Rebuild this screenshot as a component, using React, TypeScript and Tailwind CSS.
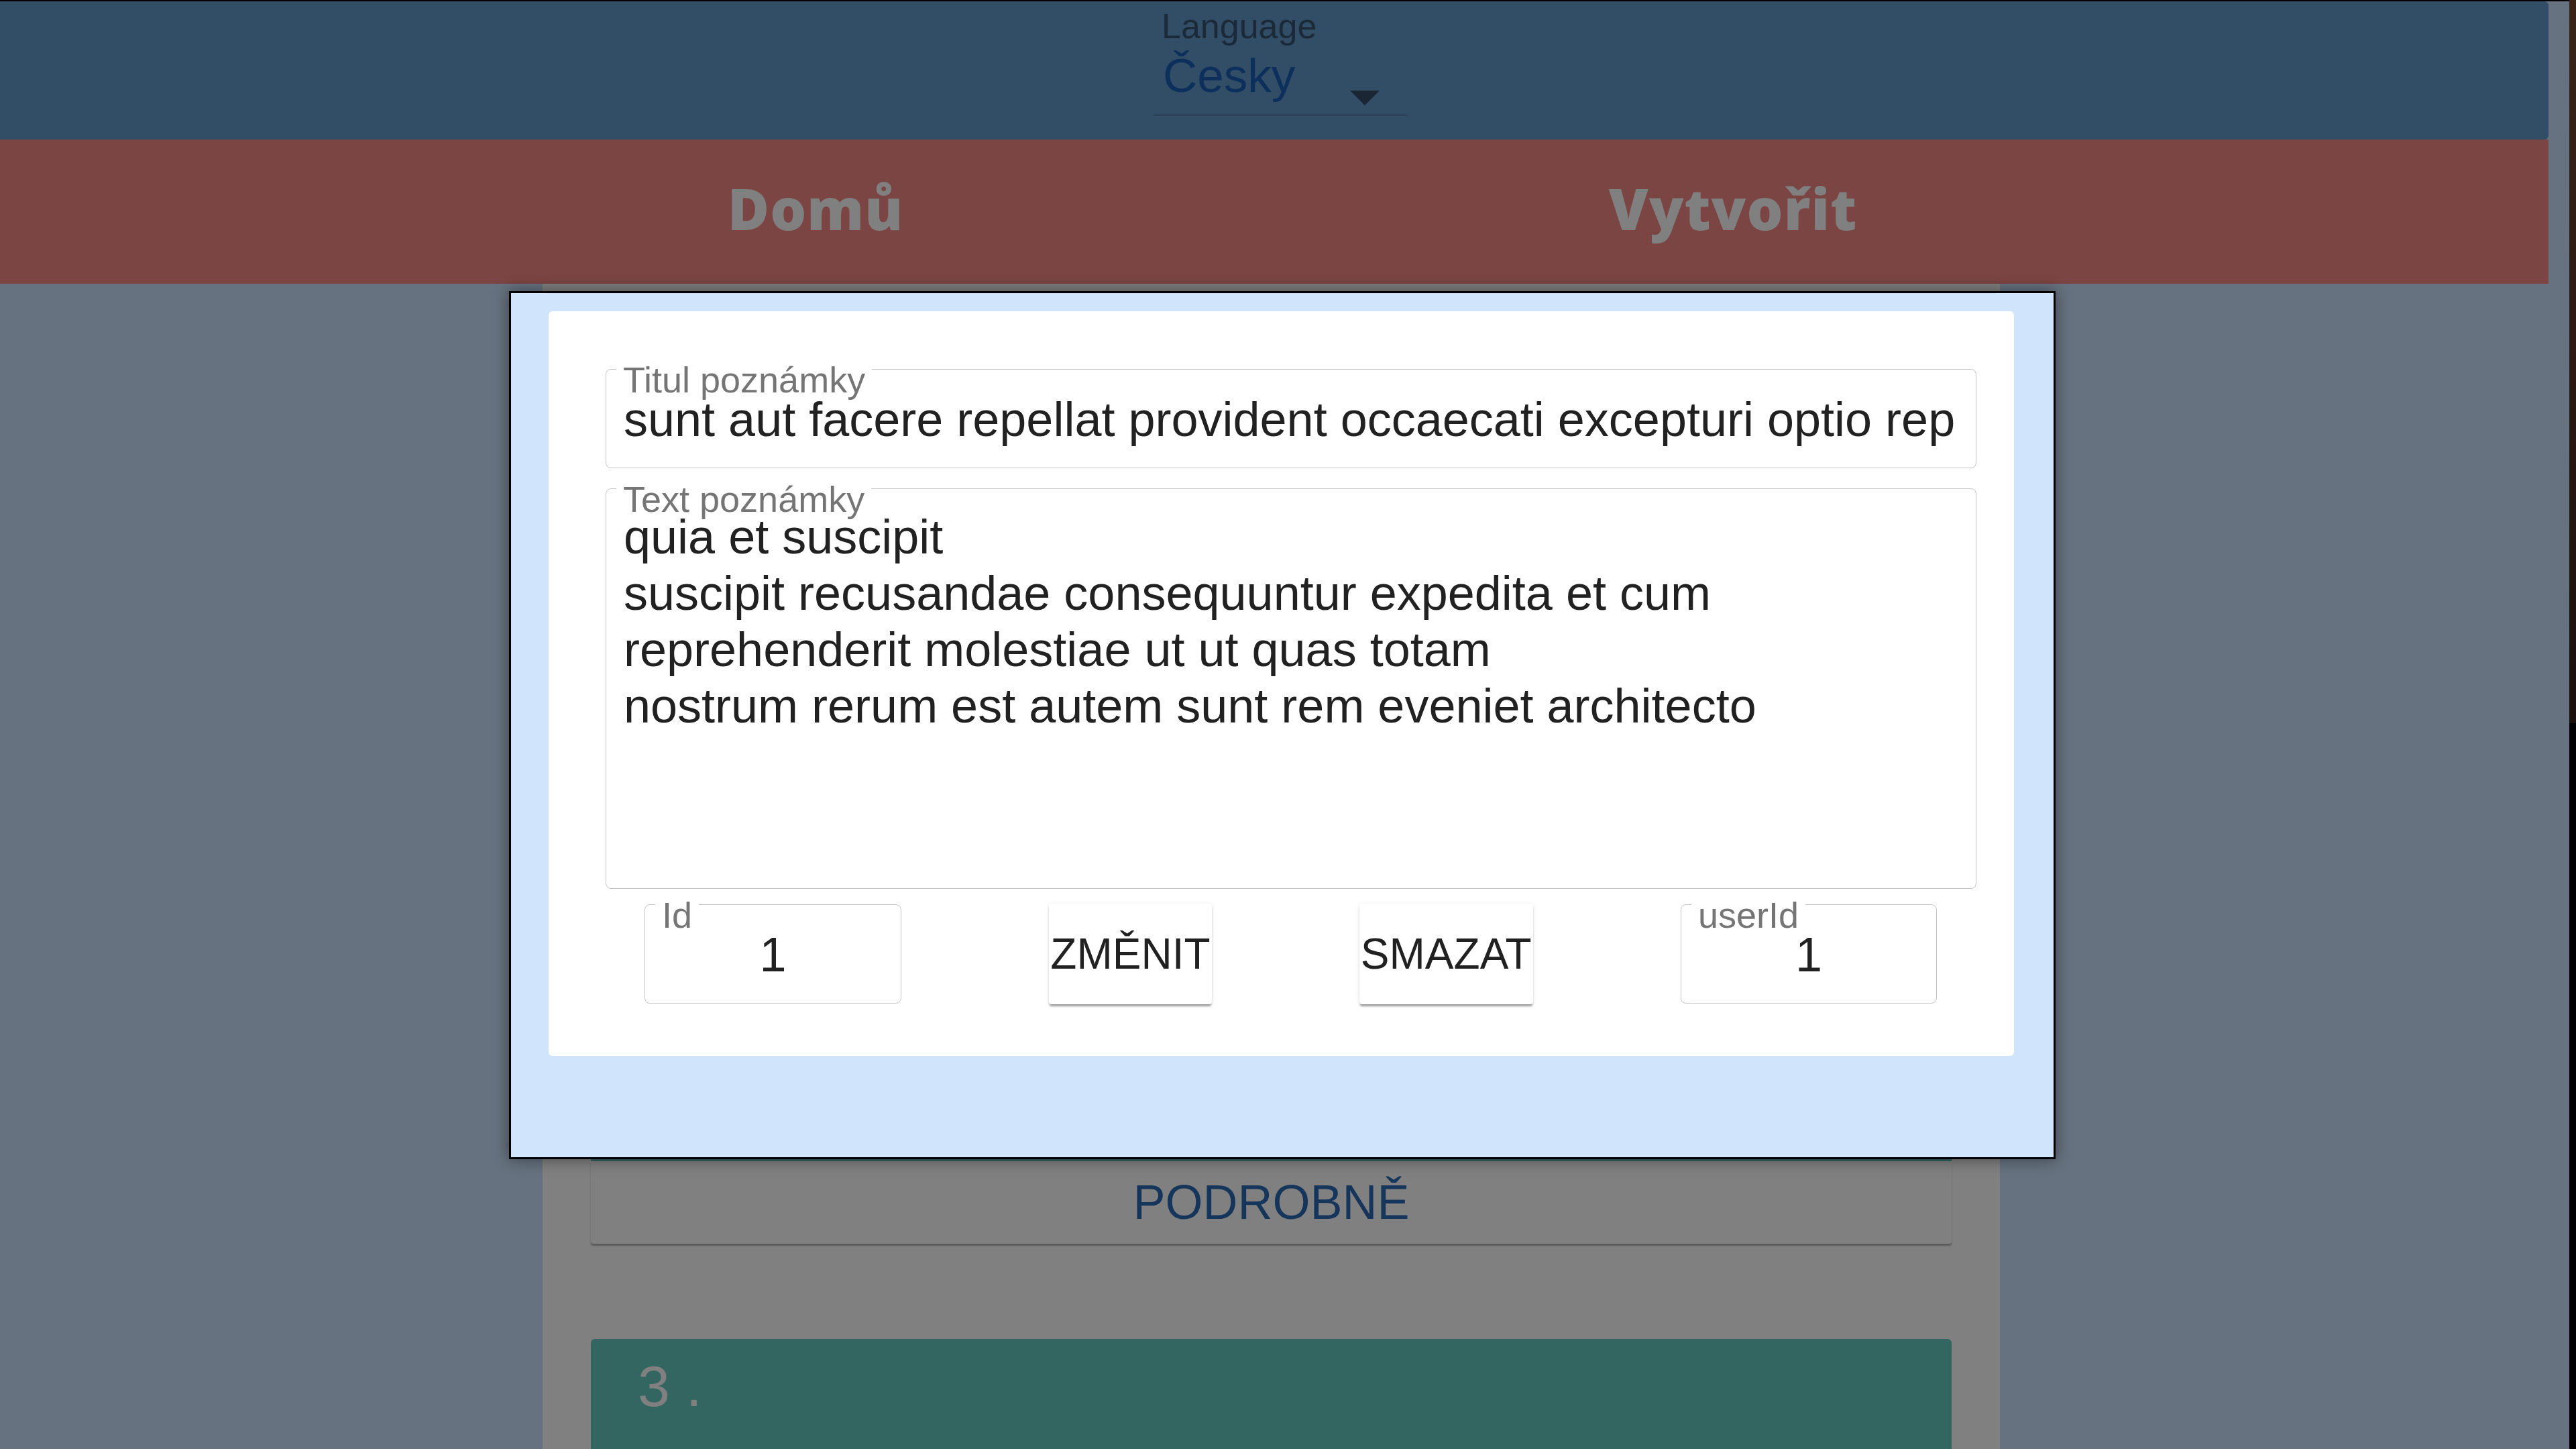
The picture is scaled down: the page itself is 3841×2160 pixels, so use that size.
import React from 'react';

const sans = "font-['Liberation_Sans',Arial,sans-serif]";

const noteTitle = 'sunt aut facere repellat provident occaecati excepturi optio reprehenderit';
const noteBody =
  'quia et suscipit\nsuscipit recusandae consequuntur expedita et cum\nreprehenderit molestiae ut ut quas totam\nnostrum rerum est autem sunt rem eveniet architecto';

const FieldLabel: React.FC<{ text: string }> = ({ text }) => (
  <span className="absolute left-[15px] -top-[12px] bg-white px-[10px] text-[54px] leading-[54px] text-[#757575]">
    {text}
  </span>
);

const SmallField: React.FC<{ label: string; value: string; width: string }> = ({ label, value, width }) => (
  <div className={`relative h-[148px] ${width} rounded-[8px] border border-[#c4c4c4] pt-[32px] text-center`}>
    <FieldLabel text={label} />
    <div className="text-[72px] leading-[84px] text-[#212121]">{value}</div>
  </div>
);

const ActionButton: React.FC<{ label: string }> = ({ label }) => (
  <button className="-mt-[1px] h-[150px] rounded-[4px] bg-white px-[2px] text-[64px] leading-[150px] text-[#212121] shadow-[0_4px_3px_-1px_rgba(0,0,0,0.35),0_1px_6px_0_rgba(0,0,0,0.1)]">
    {label}
  </button>
);

export default function App() {
  return (
    <div className={`relative flex h-[2160px] w-[3841px] overflow-hidden bg-black ${sans}`}>
      <div className="relative flex h-full w-[3831px] flex-col overflow-hidden bg-[#66727f]">
        <div className="h-[2px] w-full shrink-0 bg-black" />

        {/* language bar */}
        <header className="flex h-[206px] w-[3800px] shrink-0 justify-center rounded-r-[6px] bg-[#324d66] pt-[11px]">
          <div className="ml-[20px] w-[380px]">
            <div className="pl-[12px] text-[52px] leading-[52px] text-[#1b2a38]">Language</div>
            <div className="mt-[12px] flex items-start border-b border-[#1e2e3e] pb-[23px] pl-[14px]">
              <span className="text-[71px] leading-[71px] text-[#0d2f5c]">Česky</span>
              <svg className="-mb-[9px] ml-auto mr-[43px] mt-[58px]" width="44" height="22" viewBox="0 0 44 22">
                <polygon points="0,0 44,0 22,22" fill="#1b2634" />
              </svg>
            </div>
          </div>
        </header>

        {/* nav */}
        <nav className="flex h-[215px] w-[3800px] shrink-0 items-center justify-center bg-[#7b4543] pb-[11px] font-['Open_Sans',sans-serif] text-[85px] font-extrabold leading-none tracking-[1px] text-[#808080]">
          <div className="w-[1368px] text-center">Domů</div>
          <div className="w-[1368px] text-center">Vytvořit</div>
        </nav>

        {/* list column behind the dialog */}
        <main className="ml-[809px] flex w-[2173px] flex-1 flex-col bg-[#808080] px-[72px]">
          <div className="mt-[1077px] h-[231px] shrink-0 bg-[#336661]" />
          <div className="h-[123px] shrink-0 rounded-b-[4px] text-center text-[72px] leading-[123px] text-[#15355a] shadow-[0_3px_2px_rgba(0,0,0,0.3)]">
            PODROBNĚ
          </div>
          <div className="mt-[142px] h-[300px] shrink-0 rounded-t-[6px] bg-[#336661] pl-[70px] pt-[27px]">
            <span className="text-[86px] leading-[86px] text-[#808080]">3 .</span>
          </div>
        </main>

        {/* edit dialog */}
        <div className="absolute left-[759px] top-[434px] h-[1294px] w-[2306px] border-[3px] border-black bg-[#d0e5fb] pl-[56px] pr-[59px] pt-[27px] shadow-[0_0_22px_rgba(0,0,0,0.45)]">
          <div className="h-[1110px] rounded-[6px] bg-white pl-[85px] pr-[56px] pt-[86px]">
            <div className="relative h-[148px] rounded-[8px] border border-[#c4c4c4] px-[26px] pt-[32px]">
              <FieldLabel text="Titul poznámky" />
              <div className="overflow-hidden whitespace-nowrap text-[72px] leading-[84px] text-[#212121]">{noteTitle}</div>
            </div>

            <div className="relative mt-[30px] h-[597px] rounded-[8px] border border-[#c4c4c4] px-[26px] pt-[29px]">
              <FieldLabel text="Text poznámky" />
              <div className="whitespace-pre-line text-[72px] leading-[84px] text-[#212121]">{noteBody}</div>
            </div>

            <div className="ml-[58px] mr-[59px] mt-[23px] flex items-start justify-between">
              <SmallField label="Id" value="1" width="w-[383px]" />
              <ActionButton label="ZMĚNIT" />
              <ActionButton label="SMAZAT" />
              <SmallField label="userId" value="1" width="w-[382px]" />
            </div>
          </div>
        </div>
      </div>

      <div className="flex h-full w-[10px] flex-col">
        <div className="h-[1078px] bg-gradient-to-b from-[#3a2418] via-[#2a1a12] to-[#1a100c]" />
        <div className="flex-1 bg-black" />
      </div>
    </div>
  );
}
